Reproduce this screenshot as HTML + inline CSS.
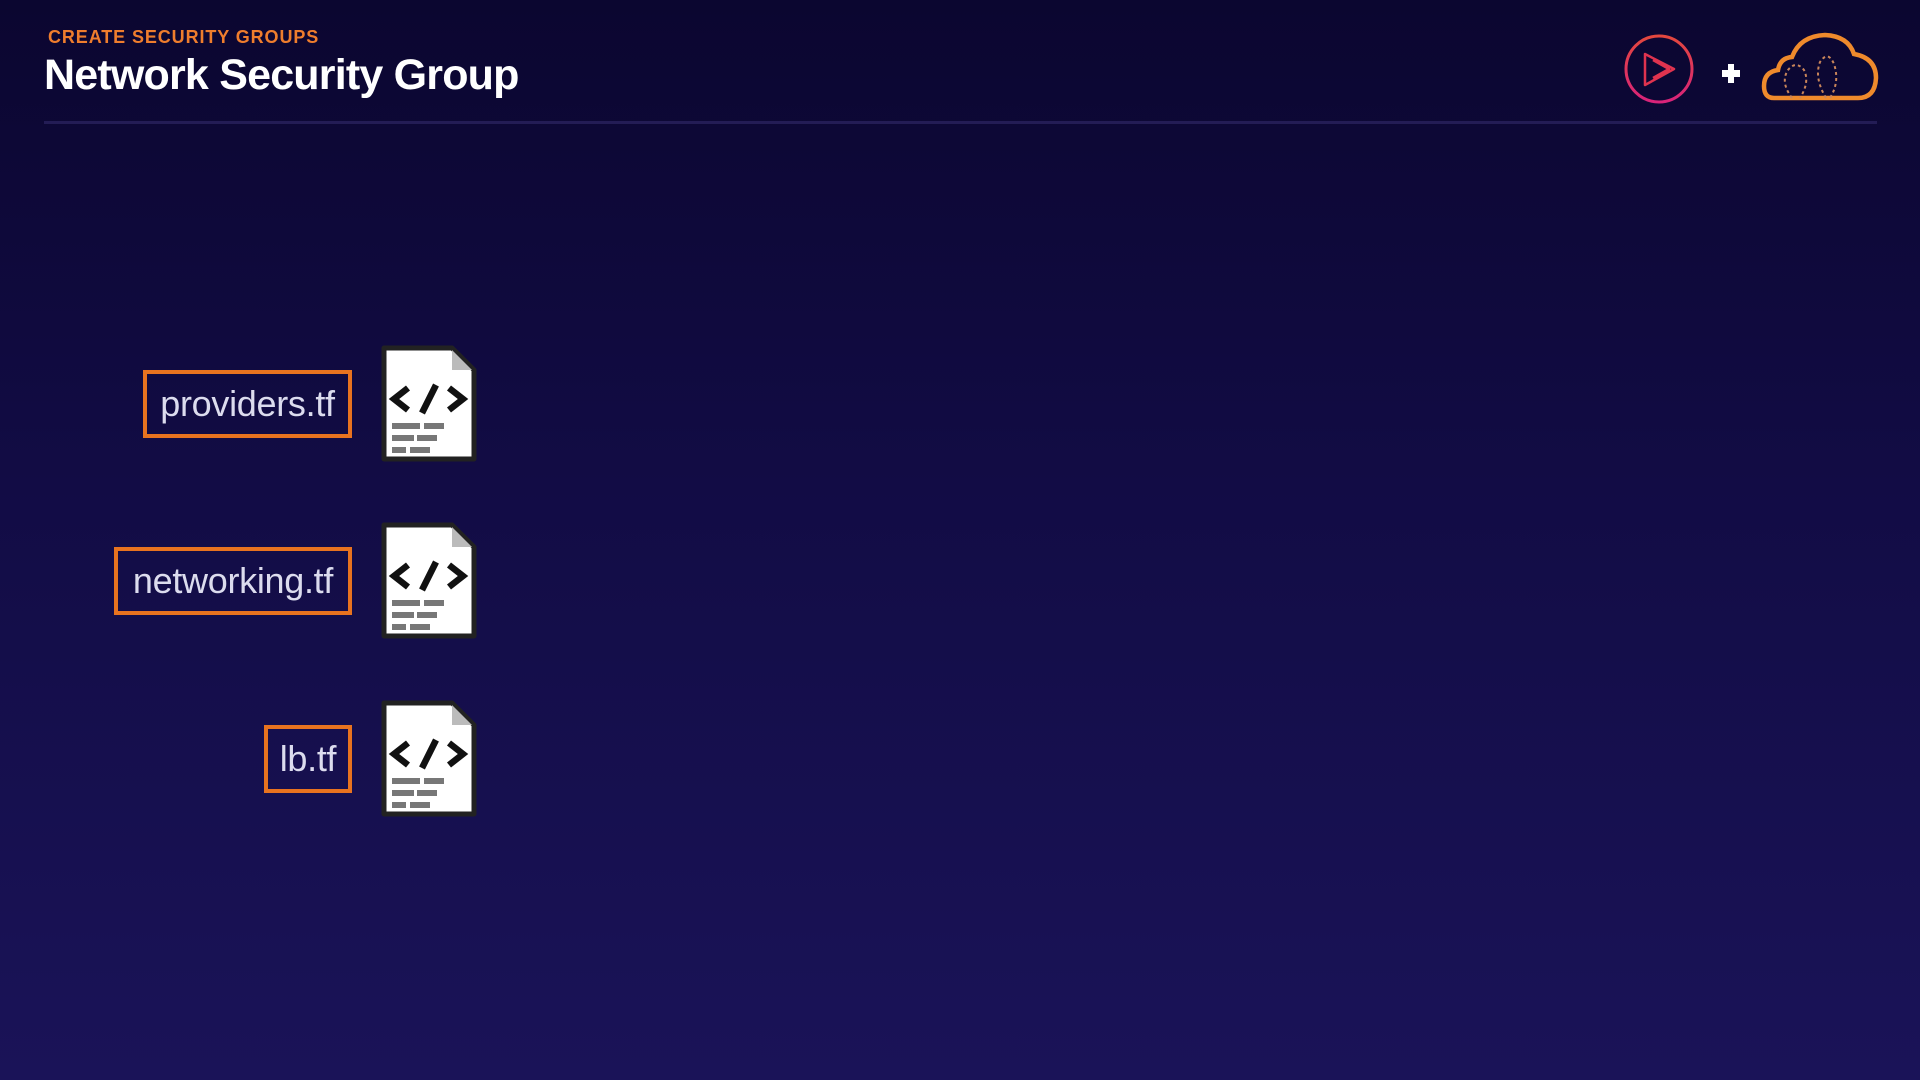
<!DOCTYPE html>
<html><head><meta charset="utf-8"><style>
body{margin:0;width:1920px;height:1080px;overflow:hidden;background:linear-gradient(180deg,#0b0630 0%,#120c45 45%,#1a1358 100%);font-family:"Liberation Sans",sans-serif;position:relative}
.sub{position:absolute;left:48px;top:27px;color:#ef7d2d;font-weight:bold;font-size:18px;letter-spacing:0.9px}
.title{position:absolute;left:44px;top:51px;color:#fff;font-weight:bold;font-size:43px;letter-spacing:-0.8px}
.line{position:absolute;left:44px;top:121px;width:1833px;height:3px;background:#231c55}
.box{position:absolute;border:4px solid #e8731f;box-sizing:border-box;color:#dcdcee;font-size:36px;display:flex;align-items:center;justify-content:center;height:68px;letter-spacing:-0.3px}
.file{position:absolute;left:380px;width:98px;height:118px}
</style></head><body>
<div class="sub">CREATE SECURITY GROUPS</div>
<div class="title">Network Security Group</div>
<div class="line"></div>
<svg style="position:absolute;left:1620px;top:30px" width="270" height="80" viewBox="0 0 270 80">
<defs><linearGradient id="g" x1="0" y1="0" x2="0" y2="1"><stop offset="0" stop-color="#e3473e"/><stop offset="1" stop-color="#d9237a"/></linearGradient></defs>
<circle cx="39" cy="39" r="33" fill="none" stroke="url(#g)" stroke-width="3"/>
<path d="M25 24 L54 39 L25 55 Z M33 30 L49 39 L33 48" fill="none" stroke="#e0334f" stroke-width="2.5" stroke-linejoin="round"/>
<path d="M102 40h6v-6h6v6h6v7h-6v6h-6v-6h-6z" fill="#fff"/>
<path d="M154 68 Q144 68 144 56 Q144 42 158 40 Q160 28 172 27 Q180 6 205 5 Q228 6 234 24 Q256 28 256 48 Q255 68 238 68 Z" fill="none" stroke="#ef8a2c" stroke-width="4.5"/>
<path d="M172 68 Q160 52 168 40 Q176 30 184 40 Q190 52 180 68 M206 68 Q194 48 200 32 Q208 20 214 34 Q220 52 210 68" fill="none" stroke="#c9855a" stroke-width="2" stroke-dasharray="3 3"/>
</svg>

<div class="box" style="left:143px;top:370px;width:209px">providers.tf</div>
<div class="box" style="left:114px;top:547px;width:238px">networking.tf</div>
<div class="box" style="left:264px;top:725px;width:88px">lb.tf</div>

<svg class="file" style="top:345px" viewBox="0 0 98 118"><use href="#f"/></svg>
<svg class="file" style="top:522px" viewBox="0 0 98 118"><use href="#f"/></svg>
<svg class="file" style="top:700px" viewBox="0 0 98 118"><use href="#f"/></svg>
<svg width="0" height="0" style="position:absolute"><defs><g id="f">
<path d="M4 3 H72 L94 25 V114 H4 Z" fill="#fff" stroke="#222" stroke-width="5" stroke-linejoin="round"/>
<path d="M72 5 L92 25 H72 Z" fill="#bbb"/>
<path d="M28 43 L14 54 L28 65 M69 43 L83 54 L69 65 M56 40 L42 68" fill="none" stroke="#111" stroke-width="6.5"/>
<rect x="12" y="78" width="28" height="6" fill="#777"/><rect x="44" y="78" width="20" height="6" fill="#777"/>
<rect x="12" y="90" width="22" height="6" fill="#777"/><rect x="37" y="90" width="20" height="6" fill="#777"/>
<rect x="12" y="102" width="14" height="6" fill="#777"/><rect x="30" y="102" width="20" height="6" fill="#777"/>
</g></defs></svg>
</body></html>
